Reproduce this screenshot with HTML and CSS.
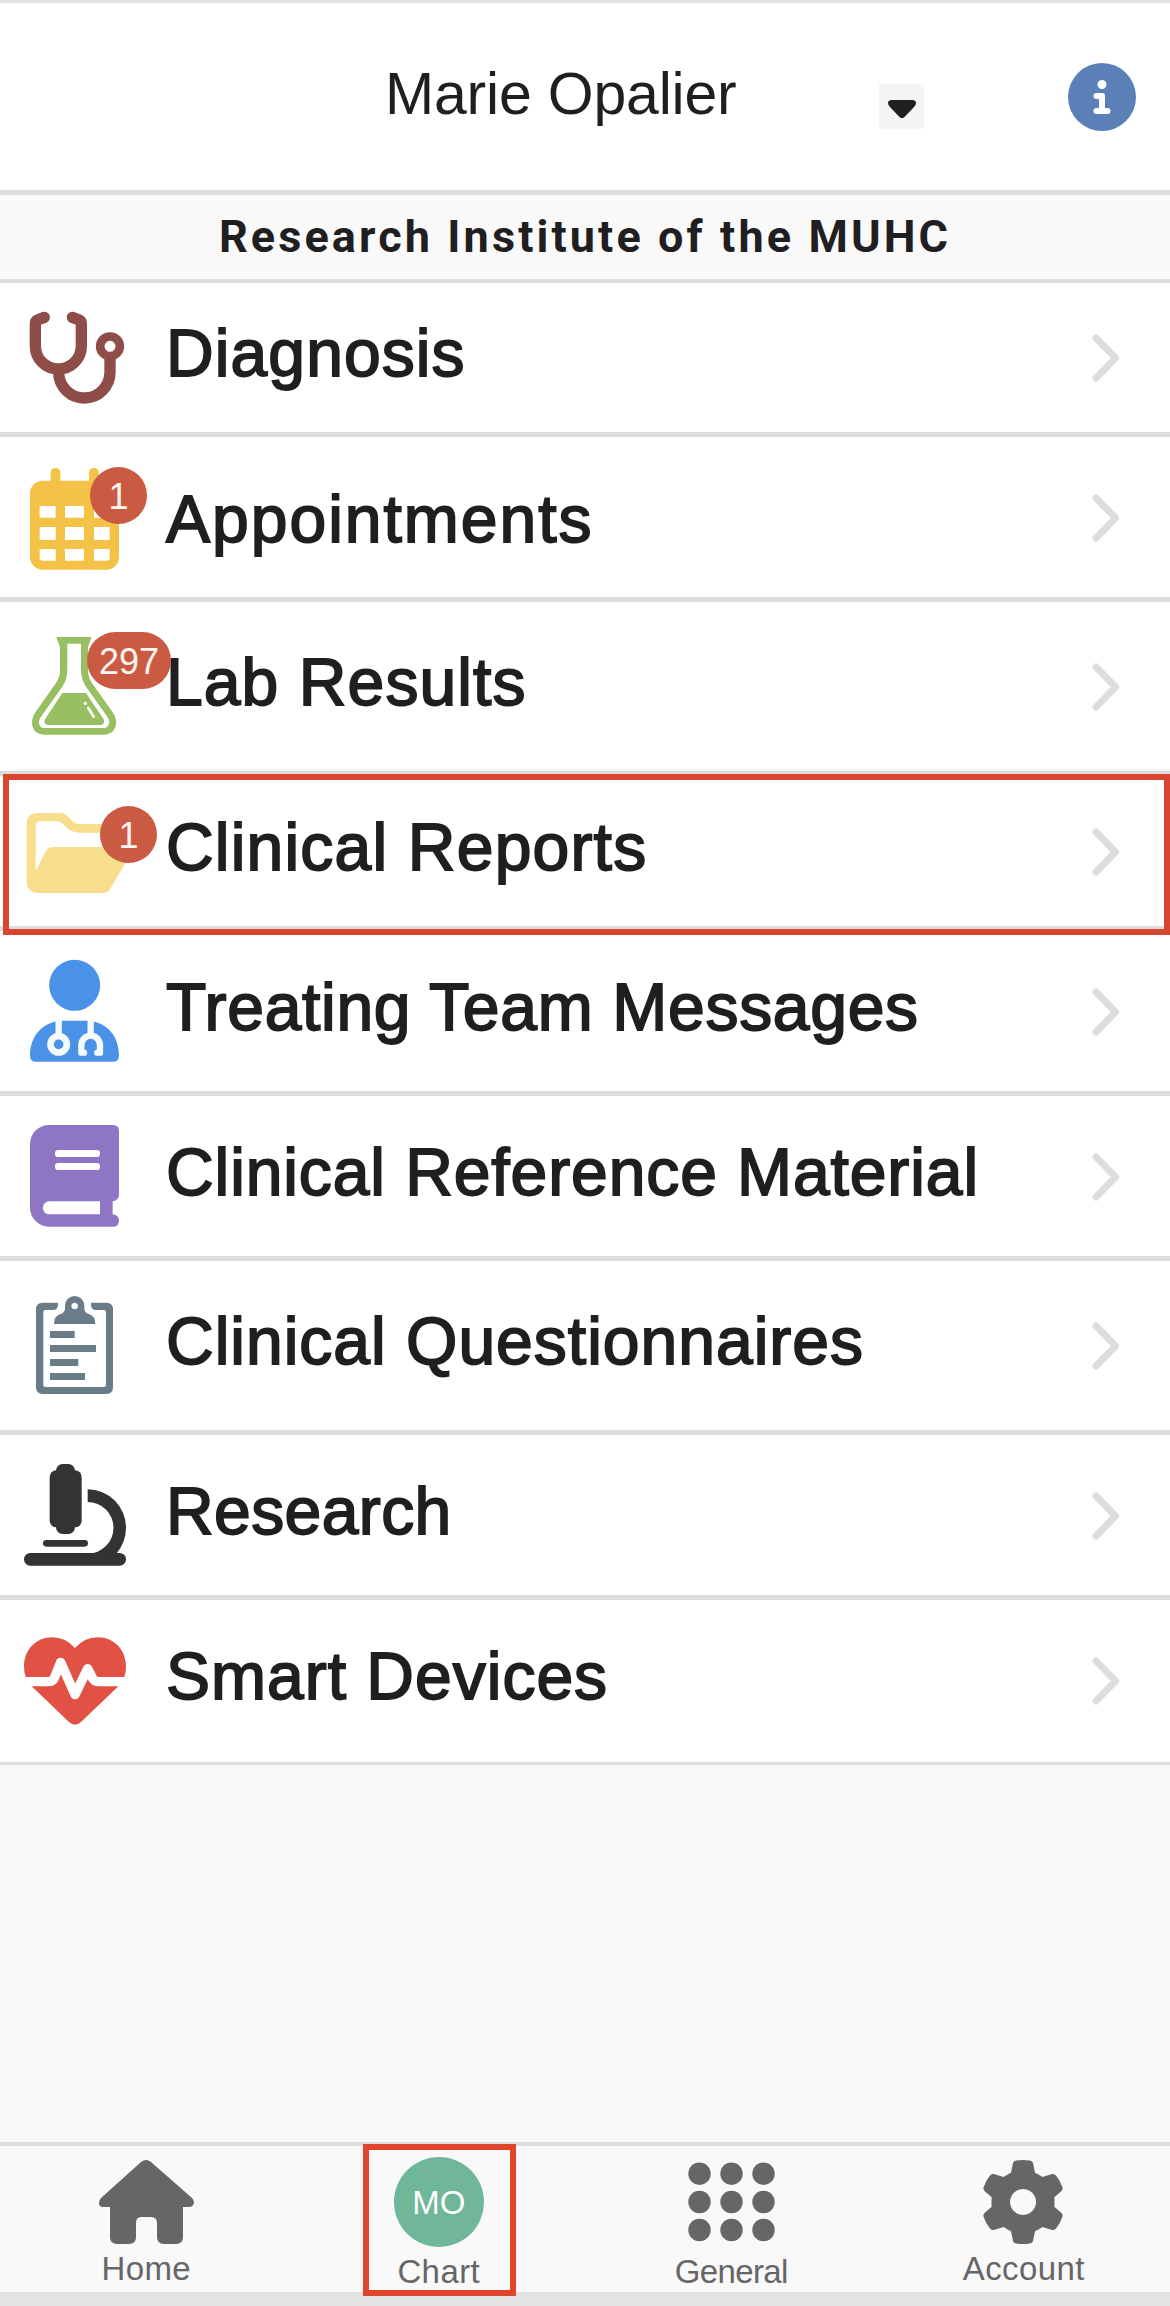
FILE: index.html
```html
<!DOCTYPE html>
<html lang="en">
<head>
<meta charset="utf-8">
<title>Chart</title>
<link rel="stylesheet" href="styles.css">
</head>
<body>
<div class="app">
  <header class="topbar">
    <h1 class="patient">Marie Opalier</h1>
    <button class="dropdown" aria-label="Choose patient"><svg width="28" height="19" viewBox="0 0 28 19"><path d="M4 0H24Q28 0 28 3Q28 5 26 7L17 16.500Q14 20 11 16.500L2 7Q0 5 0 3Q0 0 4 0Z"/></svg></button>
    <svg class="info" width="68" height="68" viewBox="0 0 68 68"><circle cx="34" cy="34" r="34" fill="#5b7fb7"/><g fill="#fff"><circle cx="34" cy="21.500" r="4.500"/><path d="M28.500 30H34.500Q37 30 37 32.500V45H39.500a3 3 0 0 1 0 6H28.500a3 3 0 0 1 0-6H31V36H28.500a3 3 0 0 1 0-6Z"/></g></svg>
  </header>
  <div class="institute">Research Institute of the MUHC</div>

  <main class="menu">
    <a class="row row-diagnosis">
      <span class="icon"><svg viewBox="0 0 450 360"><g transform="translate(0 -54)" fill="none" stroke="#8e4d48" stroke-width="34" stroke-linecap="round" stroke-linejoin="round"><path d="M133 112L112 120Q106 123 106 132V198A69 69 0 0 0 244 198V132Q244 123 238 120L217 112"/><path d="M176 277A77 77 0 0 0 330 277V235"/><circle cx="330" cy="199" r="29.500" stroke-width="26"/></g></svg></span>
      <span class="label">Diagnosis</span>
      <svg class="chevron" viewBox="0 0 28 48"><path d="M4 4L23.500 24L4 44"/></svg>
    </a>
    <a class="row row-appointments">
      <span class="icon"><svg viewBox="0 0 450 360"><g transform="translate(0 -534)"><g fill="#f3c246"><rect x="90" y="602" width="267" height="267" rx="38"/><rect x="152" y="564" width="29" height="60" rx="14"/><rect x="267" y="564" width="29" height="60" rx="14"/></g><path fill="#fff" d="M119 678h48v35h-48zM195 678h57v35h-57zM282 678h47v35h-47zM119 741h48v39h-48zM195 741h57v39h-57zM282 741h47v39h-47zM119 807h48v35h-39q-9 0-9-9zM195 807h57v35h-57zM282 807h47v26q0 9-9 9h-38z"/></g></svg><b class="badge">1</b></span>
      <span class="label">Appointments</span>
      <svg class="chevron" viewBox="0 0 28 48"><path d="M4 4L23.500 24L4 44"/></svg>
    </a>
    <a class="row row-labs">
      <span class="icon"><svg viewBox="0 0 450 360"><g transform="translate(0 -111)"><path fill="#98bf62" d="M173 141H271Q275 141 273 146L264 170V240Q264 262 276 279L339 368Q352 389 347 408Q340 434 312 434H132Q104 434 97 408Q93 388 105 368L168 279Q180 262 180 240V170L170 146Q169 141 173 141Z"/><path fill="#fff" d="M202 161H243V240Q243 267 258 290L321 379Q331 394 326 404Q322 414 310 414H134Q122 414 118 404Q114 394 124 379L187 290Q202 267 202 240Z"/><path fill="#98bf62" d="M187 309H258L311 388Q316 404 302 405H144Q129 404 135 388Z"/><circle cx="256" cy="340" r="5" fill="#fff"/><path d="M265 354L281 380" stroke="#fff" stroke-width="8" stroke-linecap="round"/></g></svg><b class="badge">297</b></span>
      <span class="label">Lab Results</span>
      <svg class="chevron" viewBox="0 0 28 48"><path d="M4 4L23.500 24L4 44"/></svg>
    </a>
    <a class="row row-reports">
      <span class="icon"><svg viewBox="0 0 450 360"><g transform="translate(0 -606)" fill="#f6de8c"><path fill-rule="evenodd" d="M80 702Q80 669 113 669H180Q194 669 204 680L214 691Q225 702 240 702H325Q354 702 354 735V771H385Q402 774 394 790L328 900Q322 909 308 909H113Q80 907 80 874ZM107 842L137 785Q145 771 160 771H327V740Q327 728 316 728H240Q217 728 201 714L187 700Q181 694 174 694H120Q107 694 107 708Z"/></g></svg><b class="badge">1</b></span>
      <span class="label">Clinical Reports</span>
      <svg class="chevron" viewBox="0 0 28 48"><path d="M4 4L23.500 24L4 44"/></svg>
    </a>
    <a class="row row-team">
      <span class="icon"><svg viewBox="0 0 450 360"><g transform="translate(0 -66)"><circle cx="224" cy="166" r="76.500" fill="#4992e8"/><path fill="#4992e8" d="M90 377C90 322 122 284 170 274Q178 272 187 272H261Q270 272 278 274C326 284 357 322 357 377Q357 395 339 395H108Q90 395 90 377Z"/><g fill="none" stroke="#f3fbff" stroke-width="19"><path d="M176 268V315M272 268V310"/><circle cx="176" cy="343" r="24.500" stroke-width="20"/><path d="M252 368H244V345A28 28 0 0 1 300 345V368H292" stroke-linecap="round" stroke-linejoin="round"/></g></g></svg></span>
      <span class="label">Treating Team Messages</span>
      <svg class="chevron" viewBox="0 0 28 48"><path d="M4 4L23.500 24L4 44"/></svg>
    </a>
    <a class="row row-reference">
      <span class="icon"><svg viewBox="0 0 450 360"><g transform="translate(0 -561)"><path fill="#8f76c5" d="M147 585H338Q357 585 357 604V795Q357 810 338 814V853Q357 856 357 872Q357 890 338 890H147A57 57 0 0 1 90 833V642A57 57 0 0 1 147 585Z"/><g fill="#fff"><rect x="165" y="660" width="135" height="21" rx="10"/><rect x="165" y="699" width="135" height="21" rx="10"/><path d="M148 814H300V853H148A19.500 19.500 0 0 1 148 814Z"/></g></g></svg></span>
      <span class="label">Clinical Reference Material</span>
      <svg class="chevron" viewBox="0 0 28 48"><path d="M4 4L23.500 24L4 44"/></svg>
    </a>
    <a class="row row-questionnaires">
      <span class="icon"><svg viewBox="0 0 450 360"><g transform="translate(0 -108)" fill="#6b7c89"><path d="M128 158H174V164Q174 180 158 180H136Q130 180 130 186V405Q130 411 136 411H312Q318 411 318 405V186Q318 180 312 180H289Q273 180 273 164V158H319Q339 158 339 178V412Q339 432 319 432H128Q108 432 108 412V178Q108 158 128 158Z"/><path fill-rule="evenodd" d="M162 222Q162 198 181 192Q195 188 195 176V167A29 29 0 0 1 253 167V176Q253 188 267 192Q286 198 286 222ZM224 158a10 10 0 1 0 .1 0Z"/><path d="M150 243h74v21h-74zM150 285h138v21h-138zM150 327h85v21h-85zM150 369h105v21h-105z"/></g></svg></span>
      <span class="label">Clinical Questionnaires</span>
      <svg class="chevron" viewBox="0 0 28 48"><path d="M4 4L23.500 24L4 44"/></svg>
    </a>
    <a class="row row-research">
      <span class="icon"><svg viewBox="0 0 450 360"><g transform="translate(0 -618)" fill="#333"><rect x="149" y="661" width="96" height="171" rx="20"/><rect x="168" y="642" width="57" height="210" rx="20"/><rect x="129" y="870" width="135" height="20" rx="10"/><rect x="72" y="909" width="306" height="38" rx="19"/><path d="M263 718A115 115 0 0 1 378 833Q378 876 349 911H263A76.500 76.500 0 0 0 263 756Z"/></g></svg></span>
      <span class="label">Research</span>
      <svg class="chevron" viewBox="0 0 28 48"><path d="M4 4L23.500 24L4 44"/></svg>
    </a>
    <a class="row row-devices">
      <span class="icon"><svg viewBox="0 0 450 360"><g transform="translate(0 -153)"><path fill="#e15244" d="M225 234Q196 202 157 202C107 202 72 241 72 290Q72 326 95 349L207 456Q225 472 243 456L355 349Q378 326 378 290C378 241 343 202 293 202Q254 202 225 234Z"/><path d="M60 335H145Q158 335 163 324L182 277L225 374L263 296L278 325Q284 335 296 335H390" fill="none" stroke="#fff" stroke-width="28" stroke-linejoin="round"/></g></svg></span>
      <span class="label">Smart Devices</span>
      <svg class="chevron" viewBox="0 0 28 48"><path d="M4 4L23.500 24L4 44"/></svg>
    </a>
  </main>

  <nav class="tabs">
    <a class="tab"><svg width="96" height="90" viewBox="0 0 96 90"><path d="M43 5Q48 1 53 5L94 41Q96 43 96 46Q95 50 91 50H85V80Q85 87 78 87H66Q59 87 59 80V66Q59 60 53 60H43Q38 60 38 66V80Q38 87 31 87H19Q12 87 12 80V50H5Q1 50 1 46Q1 43 3 41Z"/></svg><span>Home</span></a>
    <a class="tab tab-low tab-active"><b class="avatar">MO</b><span>Chart</span></a>
    <a class="tab tab-low tab-general"><svg width="90" height="90" viewBox="0 0 90 90"><circle cx="13.500" cy="16.700" r="11.200"/><circle cx="45.500" cy="16.700" r="11.200"/><circle cx="77.500" cy="16.700" r="11.200"/><circle cx="13.500" cy="45" r="11.200"/><circle cx="45.500" cy="45" r="11.200"/><circle cx="77.500" cy="45" r="11.200"/><circle cx="13.500" cy="73" r="11.200"/><circle cx="45.500" cy="73" r="11.200"/><circle cx="77.500" cy="73" r="11.200"/></svg><span>General</span></a>
    <a class="tab"><svg width="90" height="90" viewBox="-44 -45 90 90"><path fill-rule="evenodd" d="M-7-41.500Q0-42.500 7-41.500Q9.500-41 10-39L12-29.300Q16-27.500 19.400-25L29-28Q31.500-28.500 33-26.500Q37.500-21 39.500-14.500Q40-12.500 38.500-11L31.300-4.700Q31.800 0 31.300 4.700L38.500 11Q40 12.500 39.500 14.500Q37.500 21 33 26.500Q31.500 28.500 29 28L19.400 25Q16 27.500 12 29.300L10 39Q9.500 41 7 41.500Q0 42.500-7 41.500Q-9.500 41-10 39L-12 29.300Q-16 27.500-19.400 25L-29 28Q-31.500 28.500-33 26.500Q-37.500 21-39.500 14.500Q-40 12.500-38.500 11L-31.300 4.700Q-31.800 0-31.300-4.700L-38.500-11Q-40-12.500-39.500-14.500Q-37.500-21-33-26.500Q-31.500-28.500-29-28L-19.400-25Q-16-27.500-12-29.300L-10-39Q-9.500-41-7-41.500ZM0-13a13 13 0 1 0 .1 0Z"/></svg><span>Account</span></a>
  </nav>
</div>
</body>
</html>
```
FILE: styles.css
```css
*, *::after { box-sizing: border-box; }
body {
  margin: 0;
  background: #f9f9f9;
  color: #1f1f21;
  font-family: "Liberation Sans", Arial, sans-serif;
}
svg { display: block; }
.app {
  width: 1170px;
  height: 2306px;
  display: flex;
  flex-direction: column;
}

/* Header */
.topbar {
  height: 195px;
  border-top: 3px solid #e3e3e3;
  border-bottom: 5px solid #ddd;
  background: #fff;
  display: flex;
  align-items: flex-start;
}
.patient {
  margin: 57px 0 0 385px;
  width: 494px;
  font-size: 59px;
  line-height: 68px;
  font-weight: 400;
  letter-spacing: -0.2px;
  white-space: nowrap;
}
.dropdown {
  margin: 81px 0 0;
  width: 45px;
  height: 45px;
  border: 0;
  padding: 6px 0 0;
  background: #f5f5f5;
  display: flex;
  align-items: center;
  justify-content: center;
}
.dropdown svg { fill: #1f1f21; }
.info { margin: 60px 0 0 144px; }
.institute {
  height: 88px;
  border-bottom: 4px solid #ddd;
  font-family: Roboto, sans-serif;
  font-size: 45px;
  font-weight: 700;
  letter-spacing: 3.1px;
  line-height: 84px;
  text-align: center;
  white-space: nowrap;
}

/* Menu */
.menu { background: #fff; }
.row {
  position: relative;
  height: 165px;
  padding-top: 2px;
  border-bottom: 5px solid #ddd;
  display: flex;
  align-items: center;
}
.row-diagnosis { height: 154px; padding-top: 1px; }
.row-labs, .row-questionnaires { height: 174px; padding-top: 1px; }
.row-reports { height: 155px; }
.row-devices { border-bottom-width: 3px; padding-top: 0; }
.icon {
  position: relative;
  z-index: 1;
  flex: none;
  width: 150px;
  height: 120px;
}
.icon svg { width: 150px; height: 120px; }
.label {
  flex: 1;
  margin-left: 16px;
  padding-bottom: 10px;
  font-size: 66px;
  line-height: 76px;
  letter-spacing: 1.1px;
  white-space: nowrap;
  -webkit-text-stroke: 1.8px #1f1f21;
}
.row-appointments .label { padding: 2px 0 0; letter-spacing: 2px; }
.row-reports .label { letter-spacing: 1.2px; }
.row-team .label { letter-spacing: 0.7px; }
.row-reference .label { letter-spacing: 0.9px; }
.row-questionnaires .label { letter-spacing: 1px; }
.row-research .label { letter-spacing: 0.4px; }
.row-devices .label { letter-spacing: 1px; }
.chevron {
  flex: none;
  width: 28px;
  height: 48px;
  margin-right: 50px;
  fill: none;
  stroke: #ddd;
  stroke-width: 7;
  stroke-linecap: round;
  stroke-linejoin: round;
}
.badge {
  position: absolute;
  left: 90px;
  top: 9px;
  height: 57px;
  min-width: 57px;
  border-radius: 29px;
  background: #cb5a43;
  color: #fff5f0;
  font-size: 36px;
  font-weight: 400;
  line-height: 60px;
  text-align: center;
}
.row-labs .badge { left: 87px; top: 5px; width: 84px; }
.row-reports .badge { left: 100px; top: 14px; }
.row-reports::after {
  content: "";
  position: absolute;
  left: 3px;
  right: 0;
  top: -2px;
  height: 161px;
  border: 6px solid #d94630;
  z-index: 2;
}

/* Bottom tabs */
.tabs {
  margin-top: auto;
  height: 164px;
  border-top: 4px solid #ddd;
  border-bottom: 14px solid #e3e3e3;
  display: grid;
  grid-template-columns: repeat(4, 1fr);
}
.tab {
  position: relative;
  padding-top: 11px;
  display: flex;
  flex-direction: column;
  align-items: center;
  color: #666;
  font-size: 33px;
  line-height: 38px;
  letter-spacing: 0.4px;
}
.tab svg { fill: #666; }
.tab span { margin-top: 3px; }
.tab-low span { margin-top: 6px; }
.tab-general { letter-spacing: -0.6px; }
.avatar {
  width: 90px;
  height: 90px;
  border-radius: 50%;
  background: #70b698;
  color: #fff;
  font-weight: 400;
  line-height: 91px;
  letter-spacing: 0;
  text-align: center;
}
.tab-active::after {
  content: "";
  position: absolute;
  left: 70px;
  top: -2px;
  width: 153px;
  height: 152px;
  border: 6px solid #df452c;
}
```
